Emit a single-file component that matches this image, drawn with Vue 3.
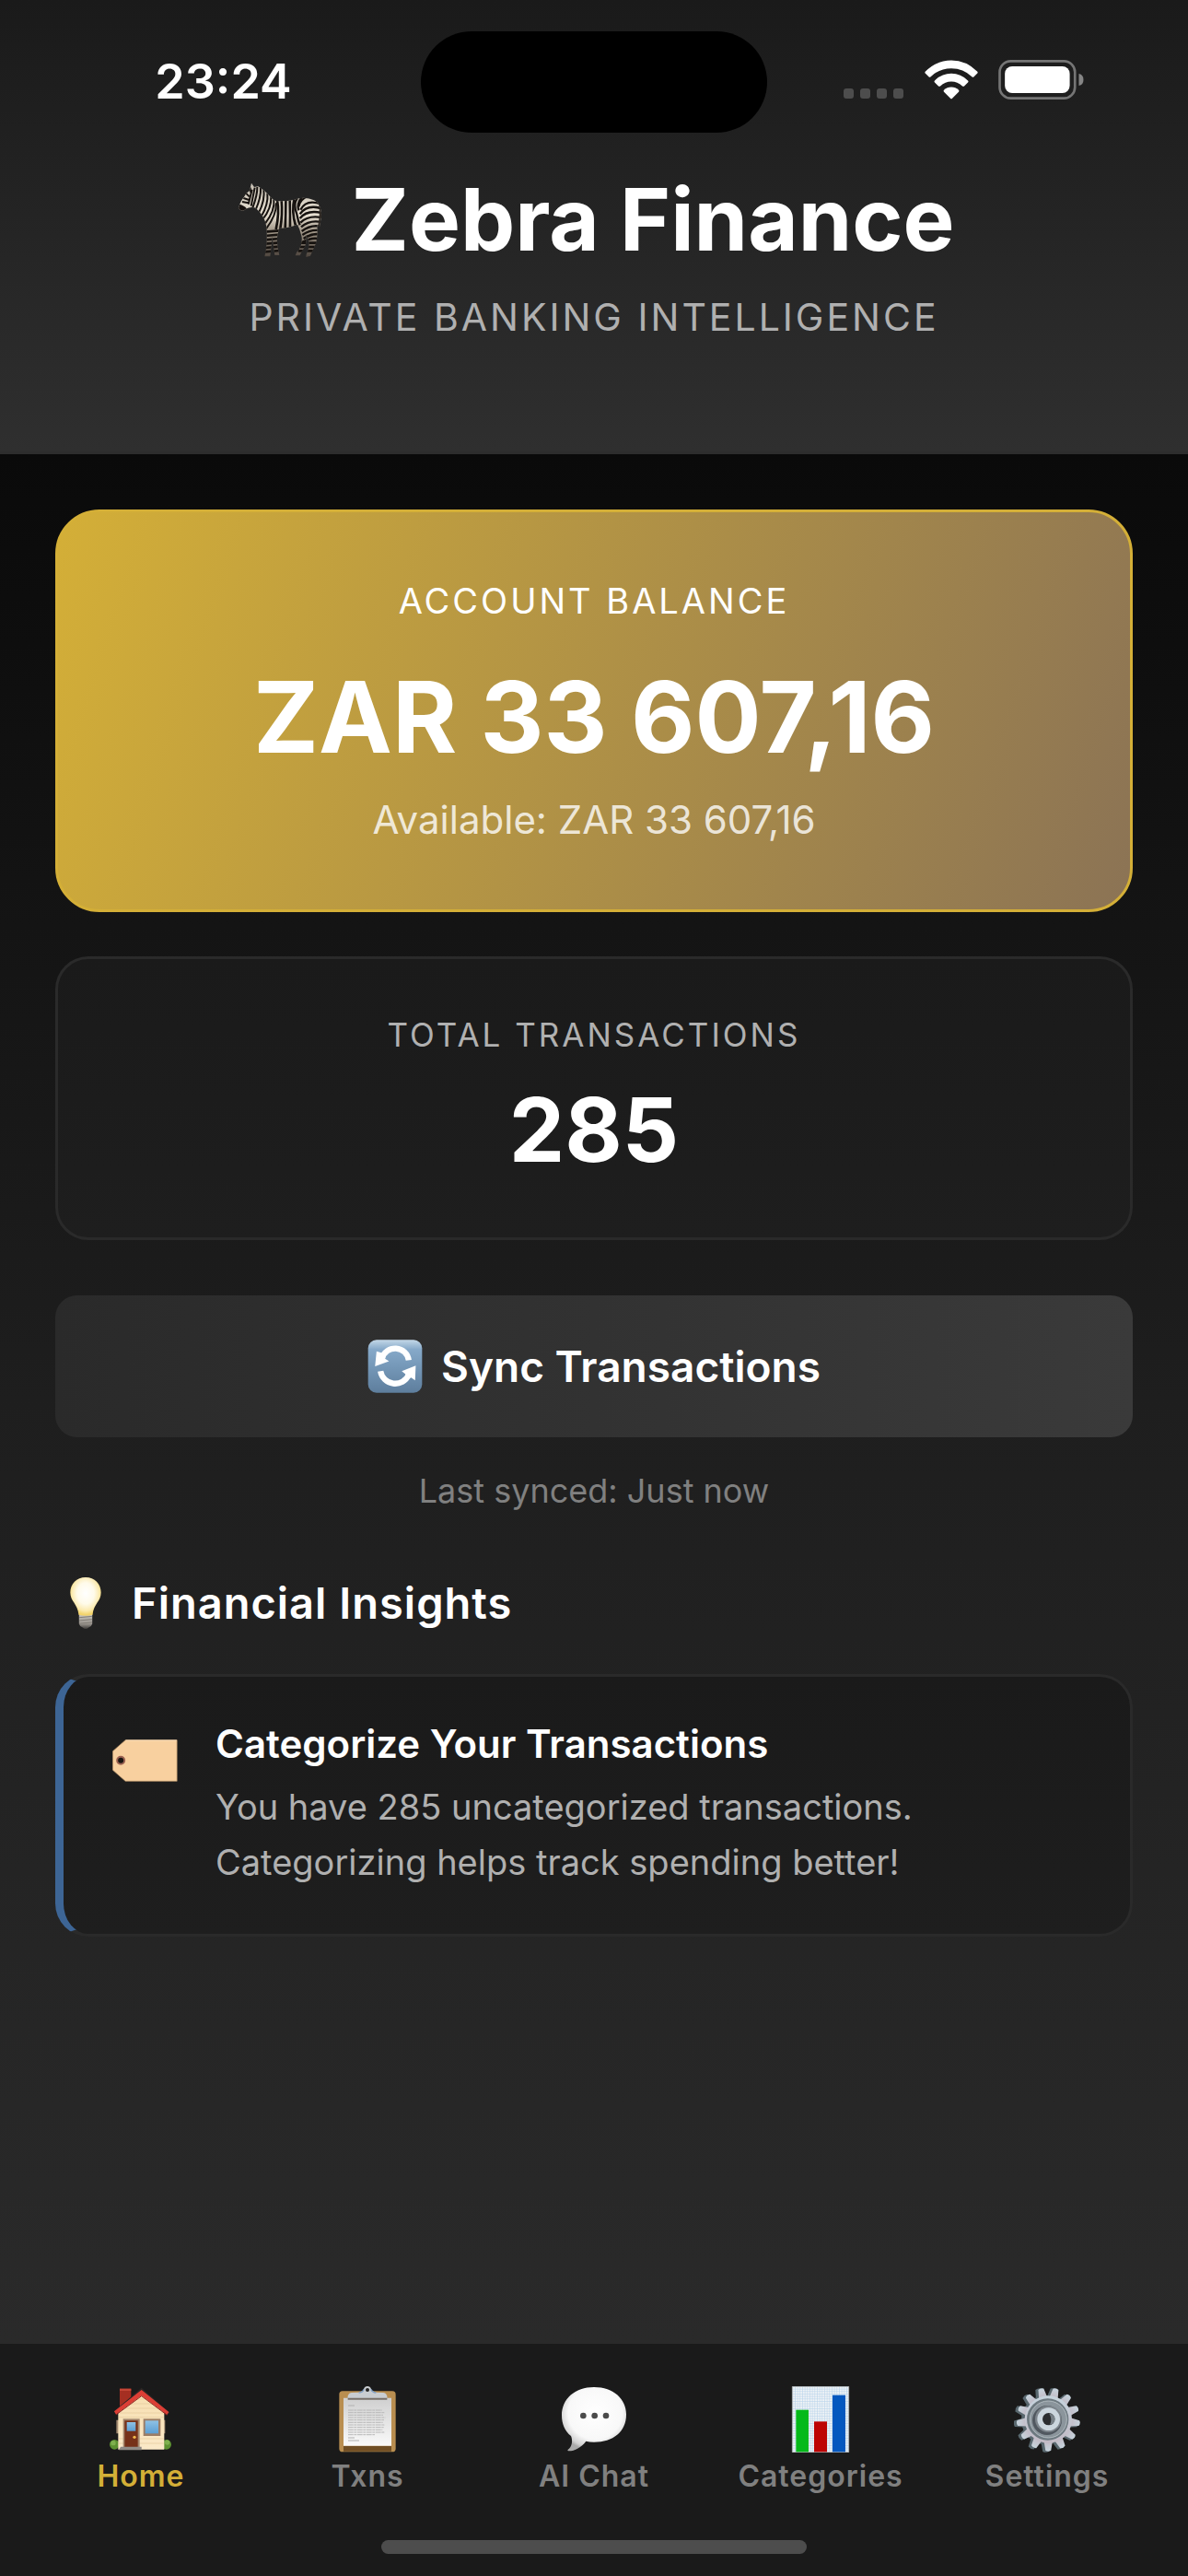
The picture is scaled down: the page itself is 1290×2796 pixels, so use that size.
<script setup>
import { ref } from 'vue'

const active = ref('home')
const tabs = [
  { id: 'home', label: 'Home' },
  { id: 'txns', label: 'Txns' },
  { id: 'chat', label: 'AI Chat' },
  { id: 'categories', label: 'Categories' },
  { id: 'settings', label: 'Settings' }
]
const teeth = Array.from({ length: 13 }, (_, i) => 14 + (i * 360) / 13)
const letterLines = [0, 1, 2, 3, 4, 5, 6, 7, 8, 9, 10]
</script>

<template>
  <div class="app">
    <header class="header">
      <div class="status">
        <time class="clock">23:24</time>
        <div class="island"></div>
        <div class="signals">
          <svg class="cell" viewBox="0 0 66 12" aria-hidden="true">
            <rect v-for="n in 4" :key="n" :x="(n - 1) * 18" width="11" height="11" rx="3" fill="#4d4d4d" />
          </svg>
          <svg class="wifi" viewBox="0 0 174 128" aria-hidden="true">
            <g fill="#fff">
              <path d="M2 38Q38 1 87 1T172 38Q174 41 172 43L160 55Q157 57 154 54Q126 27 87 27T20 54Q17 57 14 55L2 43Q0 41 2 38Z" />
              <path d="M33 67Q56 44 87 44T141 67Q144 70 141 73L129 85Q126 87 123 85Q107 70 87 70T51 85Q48 87 45 85L33 73Q30 70 33 67Z" />
              <path d="M63 98Q73 88 87 88T111 98Q114 101 111 104L90 125Q87 128 84 125L63 104Q60 101 63 98Z" />
            </g>
          </svg>
          <svg class="battery" viewBox="0 0 280 130" aria-hidden="true">
            <rect x="4" y="4" width="247" height="122" rx="36" fill="none" stroke="#757575" stroke-width="8" />
            <rect x="21" y="21" width="213" height="88" rx="24" fill="#fff" />
            <path d="M264 45Q279 48 279 65T264 85Z" fill="#858585" />
          </svg>
        </div>
      </div>

      <h1 class="title">
        <svg class="zebra" viewBox="50 55 291 255" aria-hidden="true">
          <defs>
            <linearGradient id="zb" x1="0" y1="0" x2="0" y2="1">
              <stop offset="0" stop-color="#c4bdb1" />
              <stop offset=".45" stop-color="#e6dfd1" />
              <stop offset=".62" stop-color="#a89e8f" />
              <stop offset="1" stop-color="#473e37" />
            </linearGradient>
            <clipPath id="zc">
              <path d="M98 63L107 76L120 74Q140 86 156 104Q166 118 178 121Q205 124 236 118Q270 104 302 119Q326 130 326 170L320 206L312 200Q315 240 307 262Q298 282 290 300L276 304Q276 294 281 286Q289 265 283 247L275 232Q279 255 272 270Q262 285 256 299L241 299Q244 288 253 280Q264 262 262 240Q257 215 248 198Q215 211 188 210L182 240Q180 265 189 298L174 298Q168 260 166 236Q164 265 159 302L141 302Q150 270 148 215Q145 185 132 167Q118 148 108 143Q92 140 80 147Q68 160 56 146Q60 125 74 108Q80 95 92 88Z" />
            </clipPath>
          </defs>
          <g clip-path="url(#zc)">
            <rect x="50" y="55" width="291" height="255" fill="url(#zb)" />
            <path d="M54 134Q66 130 84 147L70 160H50Z" fill="#17120f" />
            <g fill="none" stroke="#16120f" stroke-width="6">
              <path d="M80 96L91 107M72 112L90 118M68 124L88 128M94 78L96 94M100 84L88 132M109 78L97 138M117 76Q118 100 102 144M128 78Q130 108 112 150M138 84Q143 118 122 160M150 96Q154 132 130 172M162 106Q164 146 134 182M171 116Q176 152 142 196M179 128Q180 168 146 212" />
              <path d="M182 118Q190 160 178 214M196 118Q200 165 192 212M210 118Q210 165 208 212M223 116Q224 160 224 208M238 112Q228 155 242 202" stroke-width="8" />
              <path d="M250 109Q232 130 246 165Q250 186 256 200M264 106Q244 130 252 152M282 106Q256 116 252 140M330 134Q278 112 258 150M330 147Q280 130 256 164M330 161Q280 148 256 178M330 176Q284 166 258 192M326 190Q288 182 260 206M322 204Q290 198 262 220M318 217Q290 214 264 232" stroke-width="7" />
              <path d="M316 230Q294 227 268 244M314 244Q294 240 264 256M310 258H260M306 271H256M300 284H250" stroke-width="8" />
              <path d="M142 222L190 218M142 235L190 231M142 248L190 244M142 261L190 257M142 274L190 270M142 287L190 283" stroke-width="8" />
            </g>
            <path d="M320 130Q327 160 318 206" fill="none" stroke="#2b2520" stroke-width="7" />
          </g>
        </svg>
        <span>Zebra Finance</span>
      </h1>
      <p class="tagline">PRIVATE BANKING INTELLIGENCE</p>
    </header>

    <main class="content">
      <section class="card balance">
        <h2 class="balance-label">ACCOUNT BALANCE</h2>
        <p class="balance-value">ZAR 33 607,16</p>
        <p class="balance-available">Available: ZAR 33 607,16</p>
      </section>

      <section class="card total">
        <h2 class="total-label">TOTAL TRANSACTIONS</h2>
        <p class="total-value">285</p>
      </section>

      <button class="sync" type="button">
        <svg class="sync-icon" viewBox="0 0 180 176" aria-hidden="true">
          <defs>
            <linearGradient id="sg" x1="0" y1="0" x2="0" y2="1">
              <stop offset="0" stop-color="#c3d7e7" />
              <stop offset=".18" stop-color="#86a9c9" />
              <stop offset=".5" stop-color="#7598b8" />
              <stop offset="1" stop-color="#5e7e9d" />
            </linearGradient>
          </defs>
          <rect x="1" y="1" width="178" height="174" rx="28" fill="url(#sg)" />
          <path d="M47 62A45 45 0 0 1 135 68" fill="none" stroke="#fff" stroke-width="19" />
          <path d="M29 39L24 88L70 71L57 63L60 48Z" fill="#fff" />
          <path d="M42 104A49 49 0 0 0 135 116" fill="none" stroke="#fff" stroke-width="19" />
          <path d="M158 86L156 134L143 125L128 130L124 114L112 104Z" fill="#fff" />
        </svg>
        <span>Sync Transactions</span>
      </button>
      <p class="synced">Last synced: Just now</p>

      <h2 class="insights-title">
        <svg class="bulb" viewBox="0 0 104 174" aria-hidden="true">
          <defs>
            <radialGradient id="bg" cx=".5" cy=".42" r=".55">
              <stop offset="0" stop-color="#fff" />
              <stop offset=".5" stop-color="#fffbea" />
              <stop offset=".82" stop-color="#fbeaae" />
              <stop offset="1" stop-color="#f2d36b" />
            </radialGradient>
            <linearGradient id="bs" x1="0" y1="0" x2="0" y2="1">
              <stop offset="0" stop-color="#c9c6c0" />
              <stop offset=".65" stop-color="#99948d" />
              <stop offset="1" stop-color="#3a3836" />
            </linearGradient>
          </defs>
          <path d="M30 124H74V156Q72 165 62 168Q52 178 42 168Q32 165 30 156Z" fill="url(#bs)" />
          <path d="M31 135L73 131M31 145L73 141M31 155L73 151" stroke="#827d76" stroke-width="3" />
          <path d="M52 1C82 1 103 23 103 52C103 82 79 88 75 126Q52 132 29 126C25 88 1 82 1 52C1 23 22 1 52 1Z" fill="url(#bg)" />
        </svg>
        <span>Financial Insights</span>
      </h2>

      <article class="insight">
        <svg class="tag" viewBox="0 0 212 138" aria-hidden="true">
          <path d="M42 2H210V136H42L1 100V38Z" fill="#f8d09f" stroke="#b89368" stroke-width="2" />
          <path d="M43 3H209" stroke="#ffe6c2" stroke-width="3" />
          <circle cx="27" cy="68" r="12" fill="#1a1512" stroke="#9b6252" stroke-width="6" />
        </svg>
        <div class="insight-body">
          <h3 class="insight-heading">Categorize Your Transactions</h3>
          <p class="insight-text">You have 285 uncategorized transactions.<br />Categorizing helps track spending better!</p>
        </div>
      </article>
    </main>

    <nav class="tabs" aria-label="Main">
      <button
        v-for="tab in tabs"
        :key="tab.id"
        type="button"
        class="tab"
        :class="{ active: tab.id === active }"
        @click="active = tab.id"
      >
        <svg v-if="tab.id === 'home'" class="tab-icon" viewBox="0 0 216 216" aria-hidden="true">
          <defs>
            <linearGradient id="hw" x1="0" y1="0" x2="0" y2="1">
              <stop offset="0" stop-color="#f7dfb1" />
              <stop offset="1" stop-color="#fbe9c8" />
            </linearGradient>
            <linearGradient id="hg" x1="0" y1="0" x2="0" y2="1">
              <stop offset="0" stop-color="#8fc1e4" />
              <stop offset="1" stop-color="#5b9fd4" />
            </linearGradient>
          </defs>
          <circle cx="22" cy="190" r="16" fill="#5c9131" />
          <circle cx="191" cy="190" r="16" fill="#5c9131" />
          <circle cx="18" cy="185" r="8" fill="#7eb04e" />
          <circle cx="194" cy="183" r="8" fill="#7eb04e" />
          <path d="M39 8H76V56L39 74Z" fill="#a52f22" />
          <path d="M39 8H76V15H39Z" fill="#c44535" />
          <path d="M110 5L202 86L196 92L110 18L24 88L20 82Z" fill="#2b2624" />
          <path d="M28 110H36V154H28ZM181 110H187V154H181Z" fill="#a28a70" />
          <path d="M34 84L111 22L184 84V206H34Z" fill="url(#hw)" />
          <path d="M90 42H134M72 57H150M52 72H168M36 87H182M36 101H182M36 171H182M36 186H182" stroke="#e4c99a" stroke-width="2" />
          <path d="M110 12L199 84L193 93L110 31L27 92L21 82Z" fill="#dc3e35" />
          <path d="M27 93L110 32L193 94" fill="none" stroke="#8d2823" stroke-width="3" />
          <path d="M50 106H104V198H50Z" fill="#a4876e" />
          <path d="M55 112H98V198H55Z" fill="#763119" />
          <path d="M62 117H91V146H62Z" fill="url(#hg)" />
          <circle cx="87" cy="166" r="5" fill="#f2b84b" />
          <path d="M116 106H172V162H116Z" fill="#9c7d65" />
          <path d="M122 112H165V154H122Z" fill="url(#hg)" />
          <path d="M42 197H110V208H36Z" fill="#918b86" />
        </svg>

        <svg v-else-if="tab.id === 'txns'" class="tab-icon" viewBox="0 0 216 216" aria-hidden="true">
          <defs>
            <linearGradient id="pg" x1="0" y1="0" x2="0" y2="1">
              <stop offset="0" stop-color="#cfcfcf" />
              <stop offset="1" stop-color="#fafafa" />
            </linearGradient>
          </defs>
          <rect x="16" y="16" width="184" height="198" rx="11" fill="#b98e50" />
          <path d="M30 194H186V212H30Z" fill="#704e24" />
          <path d="M30 38H186V194H30Z" fill="url(#pg)" />
          <path d="M45 63H66M45 168H66M45 177H81" stroke="#b0b0b0" stroke-width="3" />
          <path v-for="n in letterLines" :key="n" :d="`M45 ${78 + n * 8}H${n === 10 ? 132 : 156 + ((n * 7) % 11)}`" stroke="#b8b8b8" stroke-width="3" stroke-dasharray="17 2 9 2" />
          <path d="M44 34H172V44H44Z" fill="#77706a" />
          <path d="M80 20Q92 19 96 9Q99 0 108 0T120 9Q124 19 137 20L160 21Q172 23 173 38H43Q44 23 56 21Z" fill="#c9cdd1" />
          <path d="M80 21Q93 20 97 10M136 21Q124 20 119 10" fill="none" stroke="#82a0c4" stroke-width="4" />
          <circle cx="108" cy="12" r="6" fill="#222" />
        </svg>

        <svg v-else-if="tab.id === 'chat'" class="tab-icon" viewBox="0 0 216 216" aria-hidden="true">
          <defs>
            <radialGradient id="cg" cx=".52" cy=".4" r=".6">
              <stop offset="0" stop-color="#fff" />
              <stop offset=".7" stop-color="#f8f8f8" />
              <stop offset=".92" stop-color="#d2d2d2" />
              <stop offset="1" stop-color="#aaa" />
            </radialGradient>
          </defs>
          <path d="M108 3C172 3 213 42 213 92C213 148 170 182 108 182Q92 182 82 179C66 200 44 212 24 211C20 209 23 206 27 203C37 194 39 176 33 162C13 146 3 122 3 95C3 41 46 3 108 3Z" fill="url(#cg)" />
          <circle v-for="x in [73, 110, 147]" :key="x" :cx="x" cy="96" r="10" fill="#4b4b4b" />
        </svg>

        <svg v-else-if="tab.id === 'categories'" class="tab-icon" viewBox="0 0 216 216" aria-hidden="true">
          <defs>
            <pattern id="grid" width="8" height="8" patternUnits="userSpaceOnUse">
              <path d="M0 0H8V8H0Z" fill="#f1f4f6" />
              <path d="M0 1H8M1 0V8" stroke="#b9d5ec" stroke-width="2" />
            </pattern>
          </defs>
          <path d="M16 1H200V215H16Z" fill="url(#grid)" stroke="#bbb" stroke-width="2" />
          <path d="M28 77H69V214H28Z" fill="#04b91a" />
          <path d="M87 115H129V214H87Z" fill="#bd0404" />
          <path d="M147 29H189V214H147Z" fill="#0558bf" />
        </svg>

        <svg v-else class="tab-icon" viewBox="0 0 216 216" aria-hidden="true">
          <defs>
            <linearGradient id="gg" x1="0" y1="0" x2="0" y2="1">
              <stop offset="0" stop-color="#c6d4dd" />
              <stop offset="1" stop-color="#c2bac5" />
            </linearGradient>
          </defs>
          <g fill="#59686f">
            <path v-for="a in teeth" :key="a" :transform="`rotate(${a} 104 110)`" d="M89 35L94 7Q104 2 114 7L119 35Z" />
            <circle cx="104" cy="110" r="80" />
          </g>
          <g fill="url(#gg)">
            <path v-for="a in teeth" :key="a" :transform="`rotate(${a} 112 108)`" d="M98 37L103 7Q112 1 121 7L126 37Z" />
            <circle cx="112" cy="108" r="77" />
          </g>
          <circle cx="110" cy="108" r="68" fill="#6d7980" />
          <circle cx="112" cy="108" r="60" fill="#8b959c" stroke="#b1babf" stroke-width="3" />
          <circle cx="108" cy="111" r="48" fill="#515860" />
          <circle cx="112" cy="107" r="43" fill="#7d858c" />
          <circle cx="113" cy="107" r="37" fill="#cbd6de" />
          <circle cx="113" cy="107" r="20" fill="#2a2d30" />
          <path d="M115 89A18 18 0 0 1 117 125Q126 108 115 89Z" fill="#778087" />
        </svg>
        <span class="tab-label">{{ tab.label }}</span>
      </button>
      <div class="home-indicator"></div>
    </nav>
  </div>
</template>

<style>
body {
  margin: 0;
  background: #1a1a1a;
}
</style>

<style scoped>
.app {
  display: flex;
  flex-direction: column;
  min-height: 100vh;
  font-family: Inter, "Liberation Sans", sans-serif;
  color: #fff;
}

h1,
h2,
h3,
p {
  margin: 0;
}

button {
  font: inherit;
  border: 0;
  cursor: pointer;
}

svg {
  display: block;
  flex: none;
}

.header {
  padding-bottom: 121px;
  border-bottom: 3px solid #2d2d2d;
  background: linear-gradient(180deg, #1a1a1a, #2f2f2f);
  text-align: center;
}

.status {
  display: grid;
  grid-template-columns: 1fr 376px 1fr;
  height: 181px;
}

.clock {
  margin-top: 57px;
  padding-left: 28px;
  font-size: 52px;
  font-weight: 600;
  line-height: 64px;
}

.island {
  height: 110px;
  margin-top: 34px;
  border-radius: 55px;
  background: #000;
}

.signals {
  display: flex;
  align-items: flex-start;
  gap: 22px;
  padding: 65px 0 0 83px;
}

.cell {
  width: 66px;
  height: 12px;
  margin-top: 31px;
}

.wifi {
  width: 58px;
  height: 43px;
}

.battery {
  width: 93px;
  height: 43px;
}

.title {
  display: flex;
  align-items: center;
  justify-content: center;
  gap: 27px;
  padding-left: 4px;
  font-size: 94px;
  font-weight: 700;
  line-height: 114px;
}

.zebra {
  width: 97px;
  height: 85px;
}

.tagline {
  margin-top: 24px;
  font-size: 41px;
  line-height: 50px;
  letter-spacing: 3px;
  color: #b0b0b0;
}

.content {
  display: flex;
  flex: 1;
  flex-direction: column;
  padding: 60px;
  background: linear-gradient(180deg, #0a0a0a, #1e1e1e 50%, #2a2a2a);
}

.card {
  text-align: center;
}

.balance {
  padding: 73px 72px 72px;
  border: 3px solid #d4af37;
  border-radius: 48px;
  background: linear-gradient(108deg, #d4af37, #8b7355) border-box;
}

.balance-label {
  font-size: 38px;
  font-weight: 400;
  line-height: 46px;
  letter-spacing: 3px;
}

.balance-value {
  margin-top: 40px;
  font-size: 107px;
  font-weight: 700;
  line-height: 126px;
}

.balance-available {
  margin-top: 24px;
  font-size: 42px;
  line-height: 50px;
  color: rgba(255, 255, 255, 0.8);
}

.total {
  margin-top: 48px;
  padding: 60px;
  border: 3px solid #2a2a2a;
  border-radius: 36px;
  background: linear-gradient(180deg, #1a1a1a, #1e1e1e);
}

.total-label {
  font-size: 35px;
  font-weight: 400;
  line-height: 44px;
  letter-spacing: 3px;
  color: #b0b0b0;
}

.total-value {
  margin-top: 24px;
  font-size: 96px;
  font-weight: 700;
  line-height: 114px;
}

.sync {
  display: flex;
  align-items: center;
  justify-content: center;
  gap: 20px;
  height: 154px;
  margin-top: 60px;
  border-radius: 24px;
  background: linear-gradient(90deg, #2a2a2a, #3a3a3a);
  color: #fff;
  font-size: 46px;
  font-weight: 600;
  line-height: 58px;
}

.sync-icon {
  width: 60px;
  height: 58px;
}

.synced {
  margin-top: 36px;
  font-size: 36px;
  line-height: 44px;
  text-align: center;
  color: #808080;
}

.insights-title {
  display: flex;
  align-items: center;
  gap: 33px;
  margin-top: 71px;
  padding-left: 16px;
  font-size: 47px;
  font-weight: 600;
  line-height: 58px;
  letter-spacing: 1px;
}

.bulb {
  width: 34px;
  height: 58px;
}

.insight {
  display: flex;
  align-items: flex-start;
  gap: 41px;
  margin-top: 48px;
  padding: 48px 48px 48px 53px;
  border: 3px solid #2a2a2a;
  border-left: 9px solid #3d6595;
  border-radius: 36px;
  background: linear-gradient(180deg, #1a1a1a, #1e1e1e);
}

.tag {
  width: 71px;
  height: 46px;
  margin-top: 20px;
}

.insight-heading {
  font-size: 42px;
  font-weight: 600;
  line-height: 50px;
}

.insight-text {
  margin-top: 13px;
  font-size: 38px;
  line-height: 60px;
  color: #b0b0b0;
}

.tabs {
  position: relative;
  display: grid;
  grid-template-columns: repeat(5, 1fr);
  padding: 46px 30px 88px;
  border-top: 3px solid #2a2a2a;
  background: #1a1a1a;
}

.tab {
  display: flex;
  flex-direction: column;
  align-items: center;
  gap: 6px;
  padding: 0;
  background: none;
  color: #808080;
}

.tab-icon {
  width: 72px;
  height: 72px;
}

.tab-label {
  font-size: 32px;
  font-weight: 600;
  line-height: 40px;
  letter-spacing: 1px;
}

.active {
  color: #d4af37;
}

.home-indicator {
  position: absolute;
  bottom: 24px;
  left: 50%;
  width: 462px;
  height: 15px;
  margin-left: -231px;
  border-radius: 8px;
  background: #4d4d4d;
}
</style>
